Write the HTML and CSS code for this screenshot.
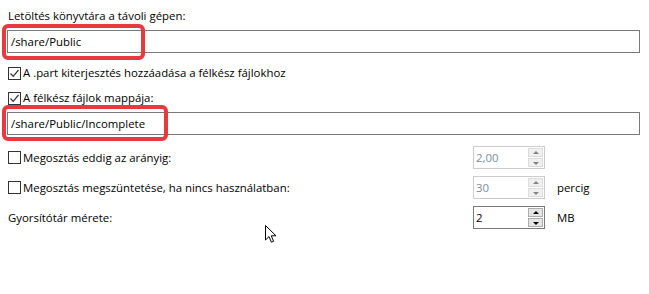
FILE: index.html
```html
<!DOCTYPE html>
<html>
<head>
<meta charset="utf-8">
<link rel="stylesheet" href="styles.css">
</head>
<body>
<div class="page">
  <div class="label first">Letöltés könyvtára a távoli gépen:</div>
  <div class="field">
    <div class="textbox">/share/Public</div>
    <div class="highlight h1"></div>
  </div>
  <label class="check c1">
    <span class="box"><svg width="11" height="11" viewBox="0 0 11 11"><path d="M1.5 5.5 L4.2 8.3 L9.5 2" fill="none" stroke="#333" stroke-width="1.2"/></svg></span>
    <span>A .part kiterjesztés hozzáadása a félkész fájlokhoz</span>
  </label>
  <label class="check c2">
    <span class="box"><svg width="11" height="11" viewBox="0 0 11 11"><path d="M1.5 5.5 L4.2 8.3 L9.5 2" fill="none" stroke="#333" stroke-width="1.2"/></svg></span>
    <span>A félkész fájlok mappája:</span>
  </label>
  <div class="field f2">
    <div class="textbox">/share/Public/Incomplete</div>
    <div class="highlight h2"></div>
  </div>
  <div class="grid">
    <label class="check">
      <span class="box"></span>
      <span>Megosztás eddig az arányig:</span>
    </label>
    <div class="spin disabled">
      <span class="val">2,00</span>
      <span class="btns"><span class="btn up"></span><span class="btn down"></span></span>
    </div>
    <div></div>

    <label class="check">
      <span class="box"></span>
      <span>Megosztás megszüntetése, ha nincs használatban:</span>
    </label>
    <div class="spin disabled">
      <span class="val">30</span>
      <span class="btns"><span class="btn up"></span><span class="btn down"></span></span>
    </div>
    <div class="unit">percig</div>

    <div class="label plain">Gyorsítótár mérete:</div>
    <div class="spin">
      <span class="val">2</span>
      <span class="btns"><span class="btn up"></span><span class="btn down"></span></span>
    </div>
    <div class="unit">MB</div>
  </div>
  <svg class="cursor" width="13" height="20" viewBox="0 0 13 20"><path d="M0.5 0.5 L0.5 15 L4 11.6 L6.4 17.2 L8.6 16.3 L6.3 10.8 L11 10.8 Z" fill="#fff" stroke="#000" stroke-width="1" stroke-linejoin="round"/></svg>
</div>
</body>
</html>
```

FILE: styles.css
```css
html, body {
  margin: 0;
  padding: 0;
  background: #fff;
}
.page {
  position: relative;
  width: 649px;
  height: 294px;
  box-sizing: border-box;
  padding: 8px 9px 0 7px;
  font-family: "Open Sans", "Noto Sans", sans-serif;
  font-size: 11.4px;
  color: #000;
}
.label {
  line-height: 16px;
  height: 16px;
}
.label.first {
  padding-left: 1px;
}
.field {
  position: relative;
  margin-top: 6px;
}
.textbox {
  height: 23px;
  box-sizing: border-box;
  border: 1px solid #7a7a7a;
  padding: 0 0 0 3px;
  line-height: 21px;
}
.highlight {
  position: absolute;
  border: 4px solid #e8393d;
  border-radius: 6px;
  box-sizing: border-box;
}
.h1 {
  left: -5px;
  top: -6px;
  width: 143px;
  height: 36px;
}
.h2 {
  left: -5px;
  top: -7px;
  width: 166px;
  height: 36px;
}
.check {
  display: flex;
  align-items: center;
  height: 16px;
  line-height: 16px;
  gap: 2px;
}
.check .box {
  width: 13px;
  height: 13px;
  box-sizing: border-box;
  border: 1px solid #333;
  display: flex;
  align-items: center;
  justify-content: center;
  flex: none;
  background: #fff;
  margin-left: 1px;
}
.c1 {
  margin-top: 12px;
}
.c2 {
  margin-top: 9px;
}
.f2 {
  margin-top: 6px;
}
.grid {
  display: grid;
  grid-template-columns: 454px 72px auto;
  column-gap: 12px;
  row-gap: 7px;
  align-items: center;
  margin-top: 11px;
}
.grid .plain {
  padding-left: 1px;
}
.spin {
  height: 23px;
  box-sizing: border-box;
  border: 1px solid #7a7a7a;
  display: flex;
  align-items: center;
  justify-content: space-between;
  padding: 0 0 0 2px;
}
.spin.disabled {
  border-color: #cccccc;
}
.spin.disabled .val {
  color: #7a8ca0;
}
.btns {
  display: flex;
  flex-direction: column;
  gap: 1px;
  margin-right: 1px;
}
.btn {
  width: 15px;
  height: 9px;
  box-sizing: border-box;
  border: 1px solid #adadad;
  background: #e5e5e5;
  position: relative;
}
.spin.disabled .btn {
  border-color: #dcdcdc;
  background: #f0f0f0;
}
.btn::after {
  content: "";
  position: absolute;
  left: 50%;
  top: 50%;
  margin-left: -3px;
  border-left: 3px solid transparent;
  border-right: 3px solid transparent;
}
.btn.up::after {
  margin-top: -2px;
  border-bottom: 3px solid #000;
}
.btn.down::after {
  margin-top: -1px;
  border-top: 3px solid #000;
}
.spin.disabled .btn.up::after {
  border-bottom-color: #838383;
}
.spin.disabled .btn.down::after {
  border-top-color: #838383;
}
.unit {
  padding-left: 0;
}
.cursor {
  position: absolute;
  left: 265px;
  top: 225px;
}
```
